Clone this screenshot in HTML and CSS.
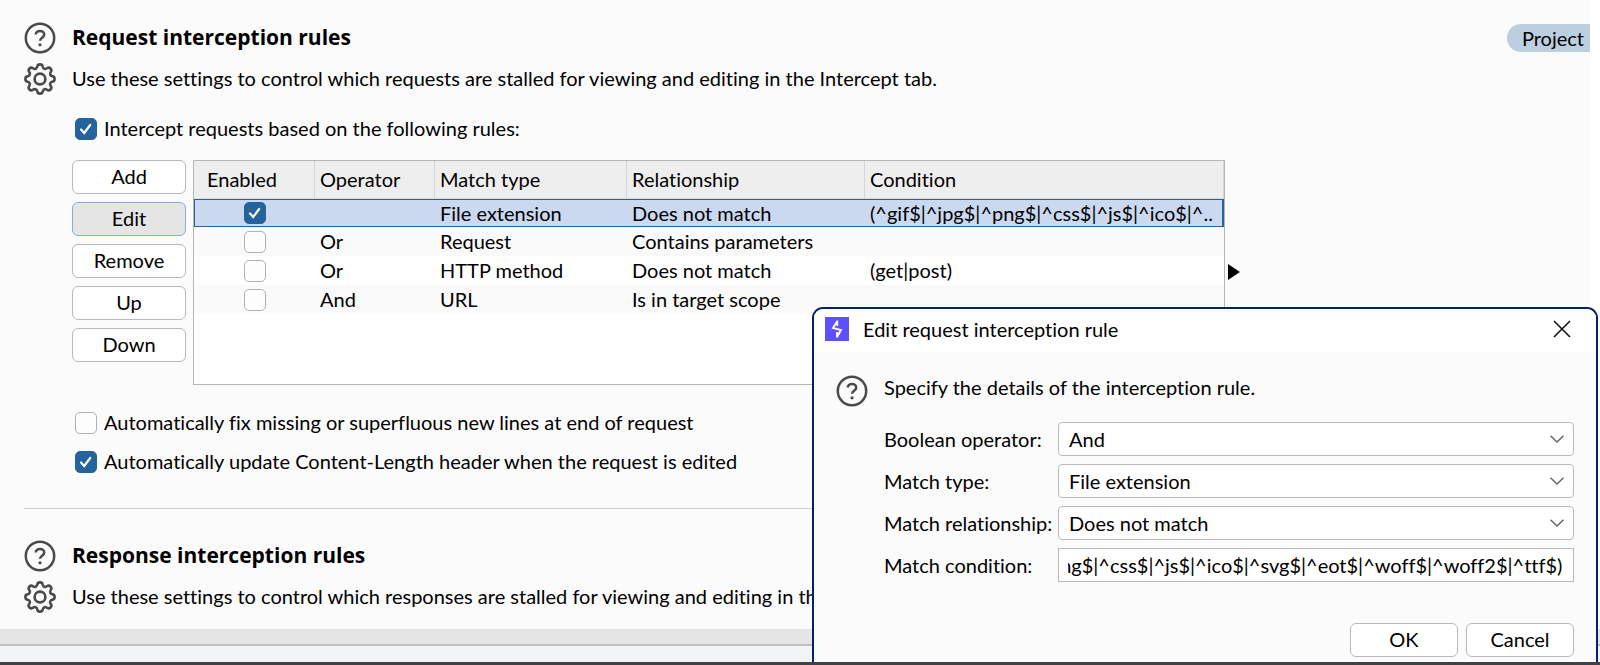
FILE: index.html
```html
<!DOCTYPE html>
<html lang="en">
<head>
<meta charset="utf-8">
<title>Proxy settings</title>
<link rel="stylesheet" href="styles.css">
</head>
<body>
<svg class="symbols" aria-hidden="true">
  <symbol id="help" viewBox="0 0 32 32">
    <circle cx="16" cy="16" r="14.2" fill="none" stroke="#4a4a4a" stroke-width="2.5"/>
    <path d="M11.8 12.6c0-2.2 1.8-3.700 4.200-3.700s4.200 1.500 4.200 3.600c0 3.300-4.100 3.100-4.100 6.200" fill="none" stroke="#4a4a4a" stroke-width="2.500"/>
    <circle cx="16" cy="22.8" r="1.6" fill="#4a4a4a"/>
  </symbol>
  <symbol id="gear" viewBox="0 0 32 32">
    <path d="M13.4 3.4Q13.6 1.4 16 1.4T18.6 3.4Q18.9 5.3 20.4 5.8T23 5.2Q24.9 3.9 26.5 5.5T26.8 9Q25.7 10.5 26.2 11.6T28.6 13.4Q30.6 13.6 30.6 16T28.6 18.6Q26.7 18.9 26.2 20.4T26.8 23Q28.1 24.9 26.5 26.5T23 26.8Q21.5 25.7 20.4 26.2T18.6 28.6Q18.4 30.6 16 30.6T13.4 28.6Q13.1 26.7 11.6 26.2T9 26.8Q7.1 28.1 5.5 26.5T5.2 23Q6.3 21.5 5.8 20.4T3.4 18.6Q1.4 18.4 1.4 16T3.4 13.4Q5.3 13.1 5.8 11.6T5.2 9Q3.9 7.1 5.5 5.5T9 5.2Q10.5 6.3 11.6 5.8T13.4 3.4Z" fill="none" stroke="#4a4a4a" stroke-width="2.6" stroke-linejoin="round"/>
    <circle cx="16" cy="16" r="5.4" fill="none" stroke="#4a4a4a" stroke-width="2.6"/>
  </symbol>
</svg>

<div class="app">
  <main class="settings">
    <section class="rules">
      <button class="icon-button" aria-label="Help"><svg><use href="#help"/></svg></button>
      <div class="rules-head">
        <h2>Request interception rules</h2>
        <span class="scope">Project</span>
      </div>
      <button class="icon-button" aria-label="Options"><svg><use href="#gear"/></svg></button>
      <p>Use these settings to control which requests are stalled for viewing and editing in the Intercept tab.</p>

      <div class="rules-body">
        <label class="check"><input type="checkbox" checked><span>Intercept requests based on the following rules:</span></label>
        <div class="rules-editor">
          <div class="actions">
            <button class="btn">Add</button>
            <button class="btn btn-active">Edit</button>
            <button class="btn">Remove</button>
            <button class="btn">Up</button>
            <button class="btn">Down</button>
          </div>
          <div class="table-box">
            <table>
              <colgroup><col class="col-enabled"><col class="col-operator"><col class="col-type"><col class="col-relation"><col></colgroup>
              <thead>
                <tr><th>Enabled</th><th>Operator</th><th>Match type</th><th>Relationship</th><th>Condition</th></tr>
              </thead>
              <tbody>
                <tr class="selected"><td><input type="checkbox" aria-label="Enable rule 1" checked></td><td></td><td>File extension</td><td>Does not match</td><td>(^gif$|^jpg$|^png$|^css$|^js$|^ico$|^..</td></tr>
                <tr><td><input type="checkbox" aria-label="Enable rule 2"></td><td>Or</td><td>Request</td><td>Contains parameters</td><td></td></tr>
                <tr><td><input type="checkbox" aria-label="Enable rule 3"></td><td>Or</td><td>HTTP method</td><td>Does not match</td><td>(get|post)</td></tr>
                <tr><td><input type="checkbox" aria-label="Enable rule 4"></td><td>And</td><td>URL</td><td>Is in target scope</td><td></td></tr>
              </tbody>
            </table>
          </div>
          <svg class="expand" viewBox="0 0 12 16" aria-hidden="true"><path d="M0 0 12 8 0 16Z"/></svg>
        </div>
        <div class="options">
          <label class="check"><input type="checkbox"><span>Automatically fix missing or superfluous new lines at end of request</span></label>
          <label class="check"><input type="checkbox" checked><span>Automatically update Content-Length header when the request is edited</span></label>
        </div>
      </div>
    </section>

    <hr>

    <section class="rules">
      <button class="icon-button" aria-label="Help"><svg><use href="#help"/></svg></button>
      <div class="rules-head"><h2>Response interception rules</h2></div>
      <button class="icon-button" aria-label="Options"><svg><use href="#gear"/></svg></button>
      <p>Use these settings to control which responses are stalled for viewing and editing in the</p>
    </section>
  </main>
  <div class="scroll-track"></div>
  <footer class="status"></footer>
</div>

<div class="dialog" role="dialog" aria-labelledby="dialog-title">
  <header class="dialog-bar">
    <svg class="logo" viewBox="0 0 24 24" aria-hidden="true"><rect width="24" height="24" fill="#5f50ff"/><path d="M12.300 3.500V9M12.300 4 8 11l8 2-4 7M12 15v5.500" fill="none" stroke="#fff" stroke-width="1.900"/></svg>
    <h1 id="dialog-title">Edit request interception rule</h1>
    <button class="close" aria-label="Close"><svg viewBox="0 0 18 18"><path d="M1 1 17 17M17 1 1 17" fill="none" stroke="#111" stroke-width="1.6"/></svg></button>
  </header>
  <form class="dialog-body">
    <button type="button" class="icon-button" aria-label="Help"><svg><use href="#help"/></svg></button>
    <div class="dialog-main">
      <p>Specify the details of the interception rule.</p>
      <div class="fields">
        <label for="operator">Boolean operator:</label>
        <div class="select"><select id="operator"><option>And</option><option>Or</option></select><svg viewBox="0 0 14 8"><path d="m.5.8 6.500 6.200 6.500-6.200"/></svg></div>
        <label for="type">Match type:</label>
        <div class="select"><select id="type"><option>File extension</option></select><svg viewBox="0 0 14 8"><path d="m.5.8 6.500 6.200 6.500-6.200"/></svg></div>
        <label for="relation">Match relationship:</label>
        <div class="select"><select id="relation"><option>Does not match</option></select><svg viewBox="0 0 14 8"><path d="m.5.8 6.500 6.200 6.500-6.200"/></svg></div>
        <label for="condition">Match condition:</label>
        <input id="condition" type="text" value="(^gif$|^jpg$|^png$|^css$|^js$|^ico$|^svg$|^eot$|^woff$|^woff2$|^ttf$)">
      </div>
      <div class="dialog-actions">
        <button type="button" class="btn">OK</button>
        <button type="button" class="btn">Cancel</button>
      </div>
    </div>
  </form>
</div>
<script src="script.js"></script>
</body>
</html>
```
FILE: styles.css
```css
* { box-sizing: border-box; }

body {
  margin: 0;
  overflow: hidden;
  background: #fff;
  color: #000;
  font: 20px/28px "Segoe UI", Lato, "Open Sans", sans-serif;
  font-variant-ligatures: none;
}

button, input, select { font: inherit; color: inherit; font-variant-ligatures: none; }
h1, h2, p { margin: 0; }
p, h1, h2, label, th, td { white-space: nowrap; }

.symbols { position: absolute; width: 0; height: 0; }

.app {
  display: flex;
  flex-direction: column;
  min-height: 100vh;
}

.settings {
  flex: 1;
  margin-right: 10px;
  padding: 22px 0 16px 24px;
  background: #fbfbfb;
}

.rules {
  display: grid;
  grid-template-columns: 32px 1fr;
  column-gap: 16px;
  row-gap: 9px;
  align-items: center;
}

.rules > p { padding-bottom: 2px; }

.rules-head {
  display: flex;
  justify-content: space-between;
  align-items: center;
}

h2 {
  padding-bottom: 2px;
  font-family: "Segoe UI", "Open Sans", sans-serif;
  font-size: 21px;
  font-weight: 700;
}

.scope {
  padding: 0 6px 0 15px;
  border-radius: 14px 0 0 14px;
  background: #bccfe1;
}

.icon-button {
  width: 32px;
  height: 32px;
  padding: 0;
  border: 0;
  background: none;
}

.icon-button svg { display: block; width: 32px; height: 32px; }

.rules-body { grid-column: 2; padding-top: 11px; }

.check {
  display: flex;
  align-items: center;
  gap: 7px;
  margin-left: 3px;
}

.check span { padding-bottom: 2px; line-height: 26px; }

input[type="checkbox"] {
  appearance: none;
  flex: none;
  width: 22px;
  height: 22px;
  margin: 0;
  border: 1px solid #b0b0b0;
  border-radius: 5px;
  background: #fdfdfd;
}

input[type="checkbox"]:checked {
  border-color: #25639c;
  background: #25639c url("data:image/svg+xml,%3Csvg xmlns='http://www.w3.org/2000/svg' viewBox='0 0 20 20'%3E%3Cpath d='m5 10.500 3.200 3.500 6-8' fill='none' stroke='white' stroke-width='2.200' stroke-linecap='round'/%3E%3C/svg%3E") center / 20px no-repeat;
}

.rules-editor {
  display: flex;
  gap: 7px;
  margin-top: 17px;
}

.actions {
  display: flex;
  flex-direction: column;
  gap: 8px;
  width: 114px;
}

.btn {
  height: 34px;
  padding: 0 0 2px;
  border: 1px solid #bdb7b7;
  border-radius: 6px;
  background: #fff;
  line-height: 28px;
}

.btn-active { border-color: #86aedb; background: #e5e5e5; }

.table-box {
  flex: 0 1 1032px;
  min-width: 0;
  min-height: 225px;
  border: 1px solid #b8b5b5;
  background: #fff;
}

table {
  width: 100%;
  border-collapse: separate;
  border-spacing: 0;
  table-layout: fixed;
}

.col-enabled { width: 121px; }
.col-operator { width: 120px; }
.col-type { width: 192px; }
.col-relation { width: 238px; }

th, td { overflow: hidden; padding: 0 0 2px 5px; text-align: left; }

th {
  height: 38px;
  border-right: 1px solid #d5d5d5;
  border-bottom: 1px solid #dadada;
  background: #eee;
  font-weight: 400;
}

th:first-child { padding-left: 13px; }
td { height: 29px; line-height: 26px; }
td:first-child { padding: 0; text-align: center; }
td input[type="checkbox"] { display: block; margin: 0 auto; }
tbody tr:nth-child(even) { background: #fafafa; }

.selected td {
  height: 28px;
  padding-bottom: 0;
  border-top: 1px solid #25639c;
  border-bottom: 1px solid #25639c;
  background: #cad9f0;
}

.selected td:first-child { border-left: 1px solid #25639c; }
.selected td:last-child { border-right: 2px solid #25639c; }

.expand { width: 12px; height: 16px; margin: 104px 0 0 -4px; }

.options {
  display: flex;
  flex-direction: column;
  gap: 11px;
  margin-top: 24px;
}

hr {
  height: 1px;
  margin: 32px 0 31px;
  border: 0;
  background: #d0d0d0;
}

.scroll-track {
  height: 17px;
  border-bottom: 2px solid #c0c0c0;
  background: #e5e5e5;
}

.status {
  height: 19px;
  border-bottom: 3px solid #404143;
  background: #f3f4f6;
}

.dialog {
  position: fixed;
  top: 307px;
  right: 2px;
  bottom: 3px;
  width: 786px;
  overflow: hidden;
  border: 2px solid #00246b;
  border-bottom: 0;
  border-radius: 11px 11px 0 0;
  background: #fbfbfb;
}

.dialog-bar {
  display: flex;
  align-items: center;
  gap: 14px;
  height: 43px;
  padding: 0 25px 3px 11px;
  background: #fff;
}

.logo { width: 24px; height: 24px; }
h1 { flex: 1; font-size: 20px; font-weight: 400; }

.close {
  width: 18px;
  height: 18px;
  padding: 0;
  border: 0;
  background: none;
}

.close svg { display: block; }

.dialog-body {
  display: flex;
  align-items: flex-start;
  gap: 16px;
  padding: 23px 22px 0;
}

.dialog-main { flex: 1; min-width: 0; }
.dialog-main > p { line-height: 24px; }

.fields {
  display: grid;
  grid-template-columns: 166px 1fr;
  align-items: center;
  gap: 8px;
  margin-top: 23px;
}

.select { position: relative; height: 34px; }

select, input[type="text"] {
  display: block;
  width: 100%;
  height: 34px;
  border: 1px solid #bdb7b7;
  background: #fff;
}

select { appearance: none; padding: 0 40px 0 10px; border-radius: 4px; }
input[type="text"] { padding: 0 11px 0 9px; border-radius: 0; }

.select svg {
  position: absolute;
  top: 13px;
  right: 10px;
  width: 14px;
  height: 8px;
  fill: none;
  stroke: #666;
  stroke-width: 1.5;
  pointer-events: none;
}

.dialog-actions {
  display: flex;
  justify-content: flex-end;
  gap: 8px;
  margin-top: 41px;
}

.dialog-actions .btn { width: 108px; }
```
FILE: script.js
```js
// Show the end of a condition that is longer than its box.
const condition = document.getElementById("condition");
condition.scrollLeft = condition.scrollWidth;
```
